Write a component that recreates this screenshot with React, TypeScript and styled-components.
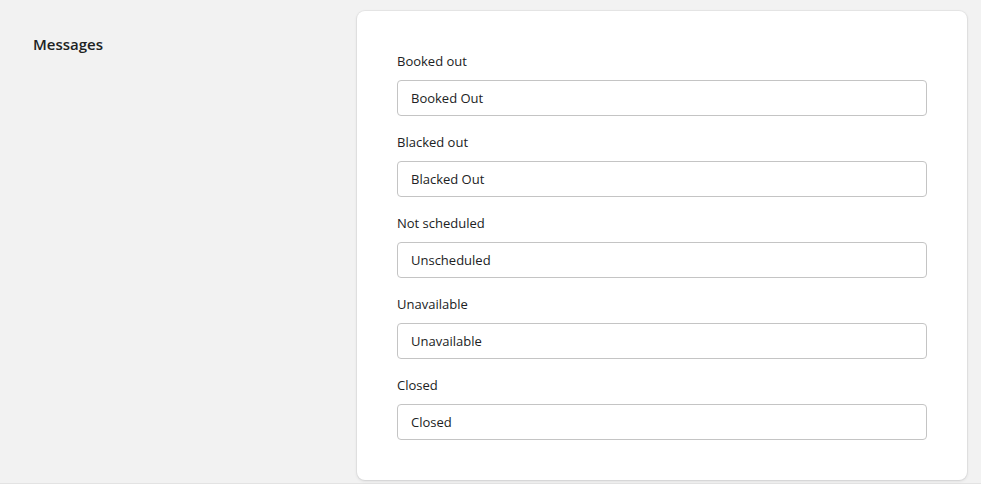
import styled, { createGlobalStyle } from "styled-components";

const GlobalStyle = createGlobalStyle`
    html, body {
        margin: 0;
        padding: 0;
        background: #fff;
        font-family: "Open Sans", "Noto Sans", sans-serif;
        color: #202223;
    }
`;

const fields = [
    { label: "Booked out", value: "Booked Out" },
    { label: "Blacked out", value: "Blacked Out" },
    { label: "Not scheduled", value: "Unscheduled" },
    { label: "Unavailable", value: "Unavailable" },
    { label: "Closed", value: "Closed" },
];

const App = () => {
    return (
        <>
            <GlobalStyle />
            <Page>
                <Aside>
                    <Heading>Messages</Heading>
                </Aside>
                <Card>
                    {fields.map((f) => (
                        <Field key={f.label}>
                            <Label>{f.label}</Label>
                            <Input defaultValue={f.value} />
                        </Field>
                    ))}
                </Card>
            </Page>
        </>
    );
};

export default App;

const Page = styled.div`
    display: flex;
    align-items: flex-start;
    padding: 11px 14px 3px 33px;
    background: #f2f2f2;
    border-bottom: 1px solid #e3e3e3;
`;

const Aside = styled.div`
    width: 324px;
    flex-shrink: 0;
    padding-top: 23px;
`;

const Heading = styled.h2`
    margin: 0;
    font-size: 15px;
    font-weight: 600;
    line-height: 20px;
    color: #202223;
`;

const Card = styled.div`
    flex: 1 0 0;
    display: flex;
    flex-direction: column;
    gap: 16px;
    padding: 40px;
    background: #fff;
    border-radius: 8px;
    box-shadow: 0 0 0 1px rgba(63, 63, 68, 0.05), 0 1px 3px rgba(63, 63, 68, 0.15);
`;

const Field = styled.div`
    display: flex;
    flex-direction: column;
    gap: 9px;
`;

const Label = styled.label`
    font-size: 13px;
    line-height: 20px;
    color: #202223;
`;

const Input = styled.input`
    box-sizing: border-box;
    height: 36px;
    padding: 0 13px;
    border: 1px solid #c4c4c4;
    border-radius: 4px;
    font-family: "Open Sans", "Noto Sans", sans-serif;
    font-size: 13px;
    color: #202223;
    background: #fff;
    outline: none;
`;
